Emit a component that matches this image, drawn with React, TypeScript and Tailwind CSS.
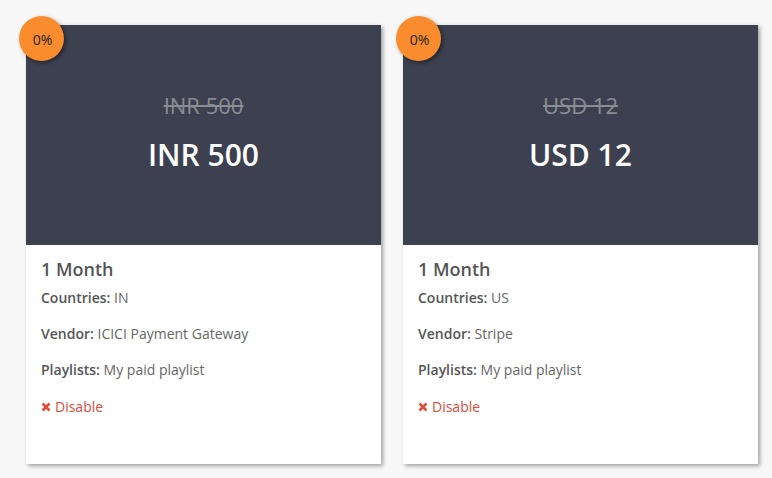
import React from "react";

type Plan = { price: string; countries: string; vendor: string };

const plans: Plan[] = [
  { price: "INR 500", countries: "IN", vendor: "ICICI Payment Gateway" },
  { price: "USD 12", countries: "US", vendor: "Stripe" },
];

function Card({ plan }: { plan: Plan }) {
  return (
    <div className="relative w-[355px] bg-white shadow-[2px_2px_4px_rgba(0,0,0,0.35)]">
      <div className="absolute left-[-7px] top-[-9px] flex h-[45px] w-[45px] items-center justify-center rounded-full bg-[#fb8c2d] pl-[2px] pt-[1px] text-[14px] text-[#222] shadow-[2px_2px_4px_rgba(0,0,0,0.4)]">
        0%
      </div>
      <div className="flex h-[220px] flex-col items-center bg-[#3d404f]">
        <div className="mt-[65px] text-[22px] leading-[30px] text-[#8a8d94] line-through">{plan.price}</div>
        <div className="mt-[15px] text-[30px] font-semibold leading-[40px] text-white">{plan.price}</div>
      </div>
      <div className="px-[15px] pb-[47px] pt-[10px] text-[14px] leading-[20px] text-[#666]">
        <div className="text-[18px] font-semibold leading-[28px] text-[#555]">1 Month</div>
        <div className="mt-[5px]">
          <span className="font-semibold text-[#555]">Countries:</span> {plan.countries}
        </div>
        <div className="mt-[16px]">
          <span className="font-semibold text-[#555]">Vendor:</span> {plan.vendor}
        </div>
        <div className="mt-[16px]">
          <span className="font-semibold text-[#555]">Playlists:</span> My paid playlist
        </div>
        <div className="mt-[17px] flex items-center gap-[4px] text-[#e04b3a]">
          <svg width="10" height="10" viewBox="0 0 10 10">
            <path d="M1.5 1.5 L8.5 8.5 M8.5 1.5 L1.5 8.5" stroke="#e04b3a" strokeWidth="2.6" strokeLinecap="butt" />
          </svg>
          <span>Disable</span>
        </div>
      </div>
    </div>
  );
}

export default function App() {
  return (
    <div
      className="min-h-[478px] w-[772px] bg-[#f7f7f7] pl-[26px] pt-[25px]"
      style={{ fontFamily: '"Open Sans", sans-serif' }}
    >
      <div className="flex gap-[22px]">
        {plans.map((p) => (
          <Card key={p.price} plan={p} />
        ))}
      </div>
    </div>
  );
}
